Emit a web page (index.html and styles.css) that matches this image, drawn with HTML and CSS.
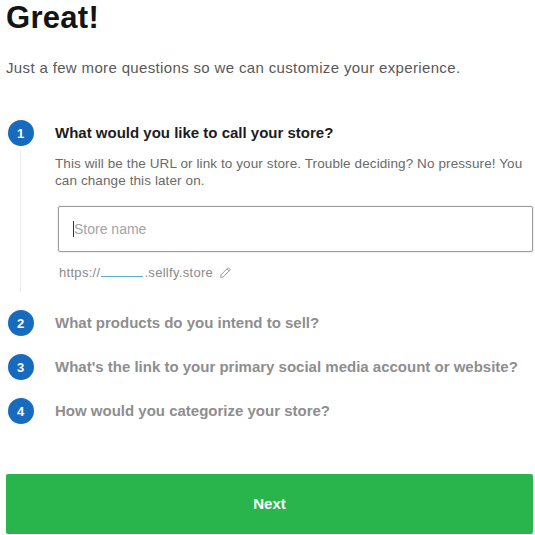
FILE: index.html
```html
<!DOCTYPE html>
<html lang="en">
<head>
<meta charset="utf-8">
<title>Great!</title>
<link rel="stylesheet" href="styles.css">
</head>
<body>
<main class="page">
  <h1 class="title">Great!</h1>
  <p class="lead">Just a few more questions so we can customize your experience.</p>

  <ol class="steps">
    <li class="step step--active">
      <div class="rail">
        <span class="badge">1</span>
        <span class="line"></span>
      </div>
      <div class="body">
        <h2 class="step-title">What would you like to call your store?</h2>
        <p class="desc">This will be the URL or link to your store. Trouble deciding? No pressure! You can change this later on.</p>
        <div class="field">
          <span class="caret"></span><span class="placeholder">Store name</span>
        </div>
        <p class="url">https://<span class="blank"></span>.sellfy.store
          <svg class="pencil" width="13" height="13" viewBox="0 0 13 13" aria-hidden="true">
            <path d="M9.2 1.6 L11.4 3.8 L4.2 11 L1.6 11.4 L2 8.8 Z M8 2.8 L10.2 5" fill="none" stroke="#9a9a9a" stroke-width="1" stroke-linejoin="round"/>
          </svg>
        </p>
      </div>
    </li>
    <li class="step">
      <div class="rail"><span class="badge">2</span></div>
      <div class="body"><h2 class="step-title">What products do you intend to sell?</h2></div>
    </li>
    <li class="step">
      <div class="rail"><span class="badge">3</span></div>
      <div class="body"><h2 class="step-title">What's the link to your primary social media account or website?</h2></div>
    </li>
    <li class="step">
      <div class="rail"><span class="badge">4</span></div>
      <div class="body"><h2 class="step-title">How would you categorize your store?</h2></div>
    </li>
  </ol>

  <button class="next" type="button">Next</button>
</main>
</body>
</html>
```

FILE: styles.css
```css
* { box-sizing: border-box; }

html, body {
  margin: 0;
  padding: 0;
  background: #ffffff;
}

body {
  font-family: "Liberation Sans", Arial, sans-serif;
  color: #1c1c1c;
}

.page {
  width: 527px;
  margin-left: 6px;
  display: flex;
  flex-direction: column;
}

.title {
  margin: 0;
  font-size: 31px;
  line-height: 36px;
  font-weight: 700;
  color: #141414;
  letter-spacing: 0.3px;
}

.lead {
  margin: 22px 0 0;
  font-size: 15px;
  line-height: 20px;
  letter-spacing: 0.35px;
  color: #585858;
}

.steps {
  list-style: none;
  margin: 42px 0 0;
  padding: 0;
  display: flex;
  flex-direction: column;
  gap: 18px;
}

.step {
  display: flex;
  gap: 21px;
}

.rail {
  width: 27px;
  margin-left: 1px;
  display: flex;
  flex-direction: column;
  align-items: center;
  flex: none;
}

.badge {
  width: 26px;
  height: 26px;
  border-radius: 50%;
  background: #176bbf;
  color: #ffffff;
  font-size: 13px;
  font-weight: 700;
  display: flex;
  align-items: center;
  justify-content: center;
  box-shadow: 0 0 0 2px #fdfaf2;
  flex: none;
}

.line {
  flex: 1;
  width: 1px;
  background: #ececec;
  margin-top: 4px;
}

.body {
  flex: 1;
  min-width: 0;
}

.step--active .body {
  padding-bottom: 11px;
}

.step-title {
  margin: 0;
  font-size: 15px;
  line-height: 26px;
  font-weight: 700;
  color: #8e8e8e;
}

.step--active .step-title {
  color: #1c1c1c;
}

.desc {
  margin: 9px 0 0;
  font-size: 13.5px;
  line-height: 17px;
  letter-spacing: 0.1px;
  color: #6a6a6a;
}

.field {
  margin: 17px 0 0 3px;
  height: 46px;
  border: 1px solid #9c9c9c;
  border-radius: 2px;
  padding: 0 14px;
  display: flex;
  align-items: center;
  box-shadow: 0 0 0 1px #f1f1f1;
}

.caret {
  width: 1px;
  height: 16px;
  background: #333;
}

.placeholder {
  font-size: 14px;
  color: #a4a4a4;
}

.url {
  margin: 12px 0 0 4px;
  font-size: 13px;
  line-height: 17px;
  letter-spacing: 0.3px;
  color: #8a8a8a;
  display: flex;
  align-items: baseline;
}

.blank {
  display: inline-block;
  width: 42px;
  height: 12px;
  border-bottom: 1px solid #5aaed2;
  margin: 0 1px;
}

.pencil {
  margin-left: 6px;
  align-self: center;
}

.next {
  margin-top: 50px;
  height: 60px;
  width: 100%;
  border: none;
  border-radius: 2px;
  background: #29b54b;
  color: #ffffff;
  font-family: "Liberation Sans", Arial, sans-serif;
  font-size: 15px;
  font-weight: 700;
  padding-bottom: 3px;
  cursor: pointer;
}
```
